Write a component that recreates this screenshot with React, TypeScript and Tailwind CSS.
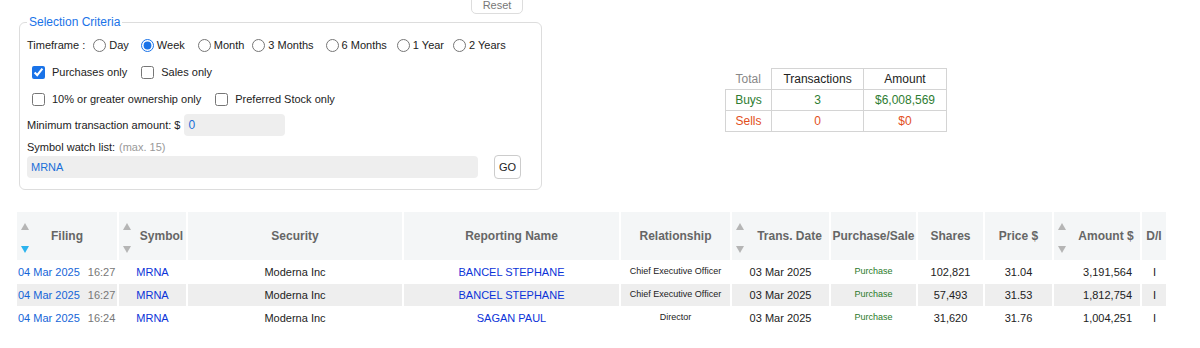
import React from "react";

const timeframes = [
   { label: "Day", radio: "ml-[8px]", checked: false },
   { label: "Week", radio: "ml-[12px]", checked: true },
   { label: "Month", radio: "ml-[13px]", checked: false },
   { label: "3 Months", radio: "ml-[8px]", checked: false },
   { label: "6 Months", radio: "ml-[12px]", checked: false },
   { label: "1 Year", radio: "ml-[10px]", checked: false },
   { label: "2 Years", radio: "ml-[9px]", checked: false },
];

const columns = [
   { label: "Filing", w: "w-[100px]", sort: "active" },
   { label: "Symbol", w: "w-[67px]", sort: "plain" },
   { label: "Security", w: "w-[214px]", sort: "" },
   { label: "Reporting Name", w: "w-[215px]", sort: "" },
   { label: "Relationship", w: "w-[109px]", sort: "" },
   { label: "Trans. Date", w: "w-[97px]", sort: "plain" },
   { label: "Purchase/Sale", w: "w-[85px]", sort: "" },
   { label: "Shares", w: "w-[65px]", sort: "" },
   { label: "Price $", w: "w-[67px]", sort: "" },
   { label: "Amount $", w: "w-[86px]", sort: "plain" },
   { label: "D/I", w: "w-[24px]", sort: "" },
];

const trades = [
   {
      date: "04 Mar 2025",
      time: "16:27",
      symbol: "MRNA",
      security: "Moderna Inc",
      name: "BANCEL STEPHANE",
      rel: "Chief Executive Officer",
      tdate: "03 Mar 2025",
      ps: "Purchase",
      shares: "102,821",
      price: "31.04",
      amount: "3,191,564",
      di: "I",
   },
   {
      date: "04 Mar 2025",
      time: "16:27",
      symbol: "MRNA",
      security: "Moderna Inc",
      name: "BANCEL STEPHANE",
      rel: "Chief Executive Officer",
      tdate: "03 Mar 2025",
      ps: "Purchase",
      shares: "57,493",
      price: "31.53",
      amount: "1,812,754",
      di: "I",
   },
   {
      date: "04 Mar 2025",
      time: "16:24",
      symbol: "MRNA",
      security: "Moderna Inc",
      name: "SAGAN PAUL",
      rel: "Director",
      tdate: "03 Mar 2025",
      ps: "Purchase",
      shares: "31,620",
      price: "31.76",
      amount: "1,004,251",
      di: "I",
   },
];

const Arrow = ({ up, color }: { up?: boolean; color: string }) => (
   <svg width="8" height="7" viewBox="0 0 8 7">
      <path d={up ? "M4 0L8 7H0Z" : "M0 0H8L4 7Z"} fill={color} />
   </svg>
);

const SortArrows = ({ active }: { active: boolean }) => (
   <div className="flex w-[18px] flex-col pl-[4px] pt-[11px]">
      <Arrow up color="#b5b5b5" />
      <div className="mt-[16px]">
         <Arrow color={active ? "#2bb3ee" : "#b5b5b5"} />
      </div>
   </div>
);

const Checkbox = ({ checked, label, first }: { checked?: boolean; label: string; first?: boolean }) => (
   <label className={`flex items-center ${first ? "ml-[5px]" : "ml-[14px]"}`}>
      <input type="checkbox" defaultChecked={checked} className="m-0 h-[13px] w-[13px] accent-[#1a73e8]" />
      <span className="ml-[7px]">{label}</span>
   </label>
);

const App = () => {
   return (
      <div className="min-h-[348px] bg-white font-['Liberation_Sans',Arial,sans-serif] text-[11px] text-[#222]">
         <div className="flex items-start">
            <div className="w-[542px] pl-[19px]">
               <div className="flex justify-end pr-[19px]">
                  <button className="-mt-[6px] h-[20px] w-[52px] rounded-[5px] border border-[#ddd] bg-white pt-[1px] text-[11px] leading-[12px] text-[#777]">
                     Reset
                  </button>
               </div>
               <fieldset className="rounded-[6px] border border-[#ddd] px-[7px] pb-[10px]">
                  <legend className="px-[2px] text-[12px] leading-[16px] text-[#1a73e8]">Selection Criteria</legend>
                  <div className="mt-[5px] flex h-[20px] items-center">
                     <span>Timeframe :</span>
                     {timeframes.map((t) => (
                        <label key={t.label} className={`flex items-center ${t.radio}`}>
                           <input
                              type="radio"
                              name="tf"
                              defaultChecked={t.checked}
                              className="m-0 h-[13px] w-[13px] accent-[#1a73e8]"
                           />
                           <span className="ml-[3px]">{t.label}</span>
                        </label>
                     ))}
                  </div>
                  <div className="mt-[7px] flex h-[20px] items-center">
                     <Checkbox first checked label="Purchases only" />
                     <Checkbox label="Sales only" />
                  </div>
                  <div className="mt-[7px] flex h-[20px] items-center">
                     <Checkbox first label="10% or greater ownership only" />
                     <Checkbox label="Preferred Stock only" />
                  </div>
                  <div className="mt-[5px] flex h-[22px] items-center">
                     <span>Minimum transaction amount: $</span>
                     <div className="ml-[4px] flex h-[22px] w-[101px] items-center rounded-[4px] bg-[#eee] pl-[4px] text-[12px] text-[#1a6fd8]">
                        0
                     </div>
                  </div>
                  <div className="mt-[4px] flex h-[14px] items-center">
                     <span>Symbol watch list:</span>
                     <span className="ml-[4px] text-[#999]">(max. 15)</span>
                  </div>
                  <div className="mt-[1px] flex items-center">
                     <div className="flex h-[22px] w-[451px] items-center rounded-[4px] bg-[#eee] pl-[4px] text-[11px] text-[#1a6fd8]">
                        MRNA
                     </div>
                     <button className="ml-[16px] h-[24px] w-[27px] rounded-[4px] border border-[#ccc] bg-white text-[11px] text-[#222]">
                        GO
                     </button>
                  </div>
               </fieldset>
            </div>

            <table className="ml-[183px] mt-[68px] border-collapse text-center text-[12px]">
               <tbody>
                  <tr>
                     <td className="h-[21px] w-[46px] border-b border-r border-[#d4d4d4] text-[#888]">Total</td>
                     <td className="w-[92px] border border-[#d4d4d4]">Transactions</td>
                     <td className="w-[83px] border border-[#d4d4d4]">Amount</td>
                  </tr>
                  <tr className="text-[#2e7d32]">
                     <td className="h-[21px] border border-[#d4d4d4]">Buys</td>
                     <td className="border border-[#d4d4d4]">3</td>
                     <td className="border border-[#d4d4d4]">$6,008,569</td>
                  </tr>
                  <tr className="text-[#e2501c]">
                     <td className="h-[21px] border border-[#d4d4d4]">Sells</td>
                     <td className="border border-[#d4d4d4]">0</td>
                     <td className="border border-[#d4d4d4]">$0</td>
                  </tr>
               </tbody>
            </table>
         </div>

         <table className="ml-[15px] mt-[21px] table-fixed border-separate border-spacing-x-[2px] border-spacing-y-[1px]">
            <thead>
               <tr>
                  {columns.map((c) => (
                     <th key={c.label} className={`${c.w} bg-[#f4f6f7] p-0 text-[12px] font-bold text-[#666]`}>
                        <div className="flex h-[48px]">
                           {c.sort && <SortArrows active={c.sort === "active"} />}
                           <div
                              className={`flex flex-1 items-center justify-center whitespace-nowrap ${
                                 c.sort === "active" ? "pr-[18px]" : ""
                              }`}
                           >
                              {c.label}
                           </div>
                        </div>
                     </th>
                  ))}
               </tr>
            </thead>
            <tbody>
               {trades.map((t, i) => (
                  <tr key={i} className={`${i === 1 ? "bg-[#eee]" : "bg-white"} text-center text-[#222]`}>
                     <td className="h-[22px] whitespace-nowrap p-0 pl-[1px] text-left">
                        <span className="text-[#1565d8]">{t.date}</span>
                        <span className="ml-[8px] text-[#777]">{t.time}</span>
                     </td>
                     <td className="p-0 text-[#0b33d8]">{t.symbol}</td>
                     <td className="p-0">{t.security}</td>
                     <td className="p-0 text-[#0b33d8]">{t.name}</td>
                     <td className="whitespace-nowrap p-0 text-[9px]">{t.rel}</td>
                     <td className="p-0">{t.tdate}</td>
                     <td className="p-0 text-[9px] text-[#2a7a2a]">{t.ps}</td>
                     <td className="p-0">{t.shares}</td>
                     <td className="p-0">{t.price}</td>
                     <td className="p-0 pr-[8px] text-right">{t.amount}</td>
                     <td className="p-0 pl-[1px]">{t.di}</td>
                  </tr>
               ))}
            </tbody>
         </table>
      </div>
   );
};

export default App;
